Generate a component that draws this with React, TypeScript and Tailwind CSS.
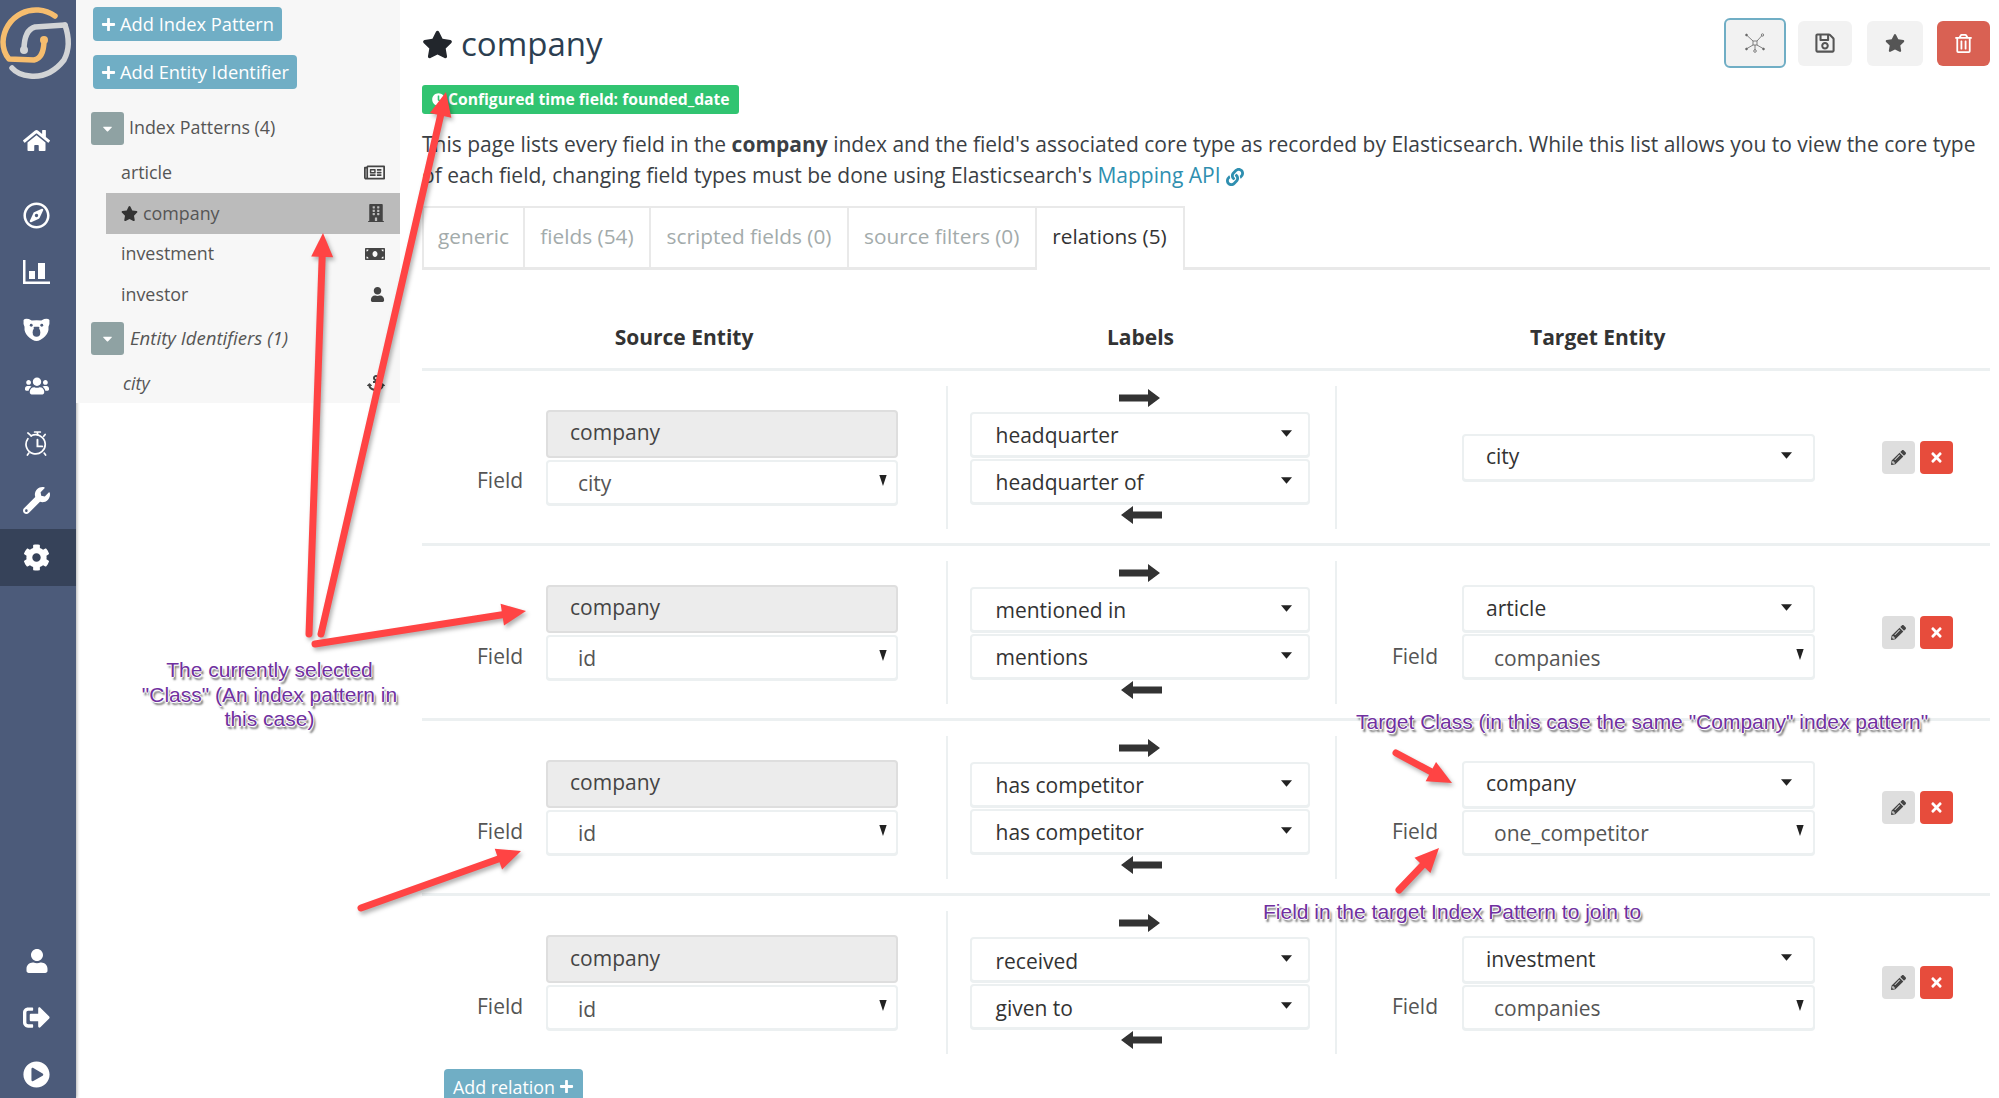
import React from 'react';
import {
  FaAnchor, FaBuilding, FaCaretDown, FaClock, FaCog, FaHome, FaLink,
  FaMoneyBill, FaPencilAlt, FaPlayCircle, FaPlus, FaRegCompass, FaRegNewspaper,
  FaRegSave, FaRegTrashAlt, FaSignOutAlt, FaStar, FaTimes, FaUser, FaUsers, FaWrench,
} from 'react-icons/fa';

const Logo = () => (
  <svg viewBox="0 0 76 85" className="h-[85px] w-[76px] shrink-0" fill="none" strokeLinecap="round" strokeLinejoin="round">
    <path d="M55 16 A33 33 0 0 0 3 42 Q3 52 9 59 L34 60 Q44 58 44 40" stroke="#f6bd6e" strokeWidth="5.5" />
    <circle cx="44" cy="40" r="4" fill="#f6bd6e" />
    <path d="M65 25 L35 27 Q24 30 24 50" stroke="#d2d4d6" strokeWidth="5.5" />
    <circle cx="24" cy="50" r="4" fill="#d2d4d6" />
    <path d="M65 25 Q72 45 64 60 Q50 78 30 76 Q18 75 12 68" stroke="#d2d4d6" strokeWidth="5.5" />
  </svg>
);

const Bear = () => (
  <svg viewBox="0 0 28 24" className="h-[23px] w-[27px]">
    <path fill="#fff" d="M0.5 2 Q2 0 6 1 L9 2.5 Q14 2 19 2.5 L22 1 Q26 0 27.5 2 Q28 6 26.5 9 Q27 15 23 19 Q18 24 14 24 Q10 24 5 19 Q1 15 1.5 9 Q0 6 0.5 2Z" />
    <circle cx="8.5" cy="7.5" r="1.5" fill="#4c5b7a" />
    <circle cx="19.5" cy="7.5" r="1.5" fill="#4c5b7a" />
    <ellipse cx="14" cy="15" rx="4" ry="4.5" fill="#4c5b7a" />
    <rect x="11" y="9" width="6" height="2.5" rx="1" fill="#4c5b7a" />
  </svg>
);

const Stopwatch = () => (
  <svg viewBox="0 0 24 28" className="h-[27px] w-[23px]" fill="none" stroke="#fff" strokeWidth="1.8" strokeLinecap="round">
    <path d="M3 9 A10 10 0 1 0 6.5 6" />
    <path d="M13 10 V17 H18" strokeWidth="2" />
    <path d="M13 2 V5 M10 2 H16 M3 3 L6.5 6 M21 4.5 L19.5 6.5 M4 24 L2.5 26 M20 24 L21.5 26" />
  </svg>
);

const ChartIcon = () => (
  <svg viewBox="0 0 27 24" className="h-[24px] w-[27px]" fill="#fff">
    <path d="M0 0 H2.5 V21.5 H27 V24 H0Z" />
    <rect x="6" y="11" width="6" height="8" />
    <rect x="15" y="3" width="7" height="16" />
  </svg>
);

const GraphIcon = () => (
  <svg viewBox="0 0 20 20" className="h-[20px] w-[20px]" fill="none" stroke="#666" strokeWidth="0.8">
    <rect x="8" y="8" width="4" height="4" />
    <path d="M8 8 L1.5 2 M12 8 L17 2.5 M8 12 L2 15.5 M12 12 L18 15.5 M10 12 V17" />
    <circle cx="1.5" cy="2" r="0.9" fill="#666" />
    <circle cx="17.5" cy="2" r="1.2" />
    <circle cx="1.5" cy="16" r="0.9" fill="#666" />
    <circle cx="18.5" cy="16" r="0.9" fill="#666" />
    <circle cx="10" cy="18" r="1.3" />
  </svg>
);

const BlockArrow = ({ left }: { left?: boolean }) => (
  <svg viewBox="0 0 41 18" className={`h-[18px] w-[41px] shrink-0 ${left ? 'rotate-180' : ''}`}>
    <polygon points="0,5.5 29,5.5 29,0 41,9 29,18 29,12.5 0,12.5" fill="#333" />
  </svg>
);

const NavItem = ({ children, active }: { children: React.ReactNode; active?: boolean }) => (
  <div className={`flex h-[57px] shrink-0 items-center justify-center pr-[3px] text-[27px] text-white ${active ? 'bg-[#364259]' : ''}`}>
    {children}
  </div>
);

const Sidebar = () => (
  <aside className="flex h-full w-[76px] shrink-0 flex-col bg-[#4c5b7a] shadow-[1px_0_3px_rgba(0,0,0,0.3)]">
    <Logo />
    <div className="mt-[26.5px]"><NavItem><FaHome /></NavItem></div>
    <div className="mt-[18px]">
      <NavItem><FaRegCompass /></NavItem>
      <NavItem><ChartIcon /></NavItem>
      <NavItem><Bear /></NavItem>
      <NavItem><FaUsers className="text-[24px]" /></NavItem>
      <NavItem><Stopwatch /></NavItem>
      <NavItem><FaWrench /></NavItem>
      <NavItem active><FaCog /></NavItem>
    </div>
    <div className="mt-auto -mb-[5px]">
      <NavItem><FaUser className="text-[24px]" /></NavItem>
      <NavItem><FaSignOutAlt /></NavItem>
      <NavItem><FaPlayCircle /></NavItem>
    </div>
  </aside>
);

const Toggle = () => (
  <div className="flex h-[33px] w-[33px] shrink-0 items-center justify-center rounded-[3px] bg-[#8fa2a3] text-[15px] text-white">
    <FaCaretDown />
  </div>
);

const AddButton = ({ label }: { label: string }) => (
  <div className="flex h-[34px] items-center gap-[4px] self-start rounded-[4px] bg-[#70aec5] px-[8px] text-[18.3px] text-white">
    <FaPlus className="text-[15px]" />
    {label}
  </div>
);

const patterns = [
  { name: 'article', icon: <FaRegNewspaper className="text-[21px]" /> },
  { name: 'company', icon: <FaBuilding className="text-[18px]" />, active: true },
  { name: 'investment', icon: <FaMoneyBill className="text-[20px]" /> },
  { name: 'investor', icon: <FaUser className="text-[15px]" /> },
];

const IndexPanel = () => (
  <div className="h-[403px] w-[324px] shrink-0 bg-[#f7f7f7] pt-[7px] text-[17.85px] text-[#555]">
    <div className="flex flex-col gap-[14px] pl-[17px]">
      <AddButton label="Add Index Pattern" />
      <AddButton label="Add Entity Identifier" />
    </div>
    <div className="mt-[23px] flex items-center gap-[5px] pl-[15px]">
      <Toggle />
      <span className="-mt-[2px]">Index Patterns (4)</span>
    </div>
    <div className="mt-[7.5px] ml-[30px]">
      {patterns.map((p) => (
        <div key={p.name} className={`flex h-[40.5px] items-center justify-between pl-[15px] pr-[15px] ${p.active ? 'bg-[#bbbbbb]' : ''}`}>
          <span className="flex items-center gap-[5px]">
            {p.active && <FaStar className="text-[#333] text-[17px]" />}
            {p.name}
          </span>
          <span className="text-[#444]">{p.icon}</span>
        </div>
      ))}
    </div>
    <div className="mt-[7.5px] flex items-center gap-[6px] pl-[15px] text-[18.6px] italic">
      <Toggle />
      <span className="-mt-[2px]">Entity Identifiers (1)</span>
    </div>
    <div className="mt-[8px] ml-[30px] flex h-[40px] items-center justify-between pl-[17px] pr-[15px] italic">
      city
      <FaAnchor className="text-[18px] text-[#444]" />
    </div>
  </div>
);

const TopButton = ({ children, className }: { children: React.ReactNode; className: string }) => (
  <div className={`flex items-center justify-center rounded-[6px] ${className}`}>{children}</div>
);

const Tabs = () => {
  const tabs = [
    { label: 'generic', w: 'w-[103px]' },
    { label: 'fields (54)', w: 'w-[126px]' },
    { label: 'scripted fields (0)', w: 'w-[198px]' },
    { label: 'source filters (0)', w: 'w-[187.5px]' },
    { label: 'relations (5)', w: 'w-[148px]', active: true },
  ];
  return (
    <div className="flex h-[64px] border-b-[3px] border-[#e9e9e9] text-[20.8px]">
      {tabs.map((t, i) => (
        <div
          key={t.label}
          className={`flex items-center justify-center border-t-2 border-r-2 border-[#e9e9e9] ${t.w} ${i === 0 ? 'border-l-2' : ''} ${t.active ? 'h-[64px] bg-white pb-[4px] text-[#333]' : 'pb-[1px] text-[#a3abab]'}`}
        >
          {t.label}
        </div>
      ))}
    </div>
  );
};

const Select = ({ value, kind }: { value: string; kind: 'field' | 'label' | 'target' }) => {
  const text = { field: 'pl-[30px] pt-[3px] text-[#555]', label: 'pl-[24px] pt-[3px] text-[#333]', target: 'pl-[22px] text-[#333]' }[kind];
  const height = kind === 'target' ? 'h-[47px]' : 'h-[45px]';
  return (
    <div className={`flex items-center justify-between rounded-[4px] border-2 border-[#ecf0f1] bg-white shadow-[0_1px_0_#ecf0f1] ${height}`}>
      <span className={text}>{value}</span>
      {kind === 'field' ? (
        <svg viewBox="0 0 8 12" className="mr-[9px] mb-[4px] h-[11px] w-[8px]"><polygon points="0,0 8,0 4,12" fill="#222" /></svg>
      ) : (
        <svg viewBox="0 0 12 7" className={`${kind === 'target' ? 'mr-[21px] mb-[3px]' : 'mr-[16px] mb-[2px]'} h-[7px] w-[11px]`}><polygon points="0,0 12,0 6,7" fill="#222" /></svg>
      )}
    </div>
  );
};

const rows = [
  { source: 'city', from: 'headquarter', to: 'headquarter of', target: 'city' },
  { source: 'id', from: 'mentioned in', to: 'mentions', target: 'article', field: 'companies' },
  { source: 'id', from: 'has competitor', to: 'has competitor', target: 'company', field: 'one_competitor' },
  { source: 'id', from: 'received', to: 'given to', target: 'investment', field: 'companies' },
];

const colGrid = 'grid grid-cols-[524px_389px_1fr]';

const RelationRow = ({ row }: { row: (typeof rows)[number] }) => (
  <div className={`${colGrid} h-[175.33px] border-t-[3px] border-[#ecf0f1] pt-[15px] text-[21px]`}>
    <div className="flex h-[143px] items-center pl-[55px]">
      <span className="mb-[25px] flex h-[45px] w-[46px] shrink-0 items-center self-end text-[#555]">Field</span>
      <div className="ml-[23px] flex w-[352px] flex-col gap-[2px]">
        <div className="flex h-[48px] items-center rounded-[4px] border-2 border-[#dedede] bg-[#ececec] pb-[2px] pl-[22px] text-[#444]">company</div>
        <Select value={row.source} kind="field" />
      </div>
    </div>
    <div className="flex h-[143px] flex-col items-center border-l-2 border-[#ecf0f1] pr-[4px] text-[#333]">
      <div className="flex h-[26px] items-start pt-[3px]"><BlockArrow /></div>
      <div className="flex w-[340px] flex-col gap-[2px]">
        <Select value={row.from} kind="label" />
        <Select value={row.to} kind="label" />
      </div>
      <div className="mt-[2px] flex h-[18px] items-center pl-[4px]"><BlockArrow left /></div>
    </div>
    <div className="flex h-[143px] items-center border-l-2 border-[#ecf0f1] pl-[125px]">
      <div className="relative flex w-[353px] flex-col gap-[2px]">
        <Select value={row.target} kind="target" />
        {row.field && (
          <>
            <Select value={row.field} kind="field" />
            <span className="absolute right-[377px] bottom-[0px] flex h-[46px] items-center text-[#555]">Field</span>
          </>
        )}
      </div>
      <div className="ml-[67px] flex gap-[5px]">
        <div className="flex h-[33px] w-[33px] items-center justify-center rounded-[4px] bg-[#dedede] text-[15px] text-[#444]"><FaPencilAlt /></div>
        <div className="flex h-[33px] w-[33px] items-center justify-center rounded-[4px] bg-[#e74c3c] text-[15px] text-white"><FaTimes /></div>
      </div>
    </div>
  </div>
);

const Arrow = ({ x1, y1, x2, y2 }: { x1: number; y1: number; x2: number; y2: number }) => {
  const len = Math.hypot(x2 - x1, y2 - y1);
  const ux = (x2 - x1) / len;
  const uy = (y2 - y1) / len;
  const head = 24;
  const half = 11;
  const bx = x2 - ux * head;
  const by = y2 - uy * head;
  return (
    <g>
      <line x1={x1} y1={y1} x2={bx} y2={by} stroke="#ff4444" strokeWidth="7" strokeLinecap="round" />
      <polygon points={`${x2},${y2} ${bx - uy * half},${by + ux * half} ${bx + uy * half},${by - ux * half}`} fill="#ff4444" />
    </g>
  );
};

const annotation = "absolute font-['Liberation_Sans',sans-serif] text-[#7030a0] [text-shadow:-1px_0_0_#fff,1px_0_0_#fff,0_-1px_0_#fff,0_1px_0_#fff,2px_3px_2px_rgba(0,0,0,0.6)]";

const Annotations = () => (
  <>
    <svg viewBox="0 0 1999 1098" className="absolute inset-0 h-[1098px] w-[1999px] drop-shadow-[2px_3px_2px_rgba(0,0,0,0.3)]">
      <Arrow x1={309} y1={634} x2={323} y2={233} />
      <Arrow x1={321} y1={634} x2={446} y2={92} />
      <Arrow x1={315} y1={644} x2={526} y2={611} />
      <Arrow x1={361} y1={908} x2={521} y2={851} />
      <Arrow x1={1396} y1={753} x2={1452} y2={783} />
      <Arrow x1={1399} y1={890} x2={1439} y2={848} />
    </svg>
    <div className={`${annotation} left-[132px] top-[658px] w-[275px] text-center text-[21px] leading-[24.5px]`}>
      The currently selected "Class" (An index pattern in this case)
    </div>
    <div className={`${annotation} left-[1356px] top-[710px] whitespace-nowrap text-[21px] leading-[24px]`}>
      Target Class (in this case the same "Company" index pattern"
    </div>
    <div className={`${annotation} left-[1263px] top-[900px] whitespace-nowrap text-[21px] leading-[24px]`}>
      Field in the target Index Pattern to join to
    </div>
  </>
);

export default function App() {
  return (
    <div className="relative flex h-[1098px] w-[1999px] overflow-hidden bg-white font-['Open_Sans',sans-serif]">
      <Sidebar />
      <IndexPanel />
      <main className="min-w-0 flex-1 pl-[22px] pr-[9px]">
        <div className="flex h-[85px] items-start justify-between pt-[17px]">
          <h1 className="flex h-[54px] items-center gap-[8px] text-[33px] text-[#2c3e50]">
            <FaStar className="text-[#22262c] text-[31px]" />
            company
          </h1>
          <div className="mt-[1px] flex h-[50px] items-center">
            <TopButton className="h-[50px] w-[62px] border-2 border-[#70aec5] bg-[#f2f2f2]"><GraphIcon /></TopButton>
            <TopButton className="ml-[12px] h-[45px] w-[54px] bg-[#f2f2f2] text-[22px] text-[#555]"><FaRegSave /></TopButton>
            <TopButton className="ml-[15px] h-[45px] w-[56px] bg-[#f2f2f2] text-[20px] text-[#555]"><FaStar /></TopButton>
            <TopButton className="ml-[14px] h-[45px] w-[53px] bg-[#d96153] text-[19px] text-white"><FaRegTrashAlt /></TopButton>
          </div>
        </div>
        <div className="flex h-[29px] w-[317px] items-center gap-[3px] rounded-[3px] bg-[#31c471] pl-[10px] text-[15.7px] font-bold whitespace-nowrap text-white">
          <FaClock className="text-[13px]" />
          Configured time field: founded_date
        </div>
        <p className="mt-[14.5px] text-[21px] leading-[31px] text-[#3b3f45]">
          This page lists every field in the <strong>company</strong> index and the field's associated core type as recorded by Elasticsearch. While this list allows you to view the core type of each field, changing field types must be done using Elasticsearch's{' '}
          <span className="text-[#2f8fb0]">Mapping API</span>{' '}
          <FaLink className="inline text-[#2f8fb0] text-[18px]" />
        </p>
        <div className="mt-[15.5px]"><Tabs /></div>
        <div className={`${colGrid} h-[97.5px] items-center pt-[38px] text-center text-[21px] font-bold text-[#333]`}>
          <span>Source Entity</span>
          <span>Labels</span>
          <span className="pl-[195px] text-left">Target Entity</span>
        </div>
        {rows.map((r, i) => <RelationRow key={i} row={r} />)}
        <div className="ml-[22px] flex h-[40px] w-[139px] items-start justify-center gap-[4px] rounded-[4px] bg-[#70aec5] pt-[5px] text-[17.85px] text-white">
          Add relation
          <FaPlus className="mt-[5px] text-[15px]" />
        </div>
      </main>
      <Annotations />
    </div>
  );
}
